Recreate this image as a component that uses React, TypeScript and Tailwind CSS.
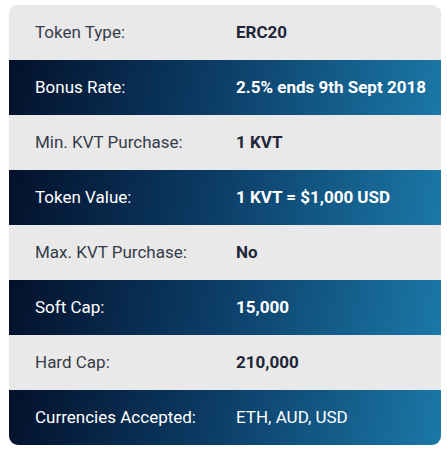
import React from "react";

const rows: { label: string; value: string; dark: boolean; valueWeight?: string }[] = [
  { label: "Token Type:", value: "ERC20", dark: false },
  { label: "Bonus Rate:", value: "2.5% ends 9th Sept 2018", dark: true },
  { label: "Min. KVT Purchase:", value: "1 KVT", dark: false },
  { label: "Token Value:", value: "1 KVT = $1,000 USD", dark: true },
  { label: "Max. KVT Purchase:", value: "No", dark: false },
  { label: "Soft Cap:", value: "15,000", dark: true },
  { label: "Hard Cap:", value: "210,000", dark: false },
  { label: "Currencies Accepted:", value: "ETH, AUD, USD", dark: true, valueWeight: "font-normal" },
];

export default function App() {
  return (
    <div className="w-[447px] h-[451px] bg-white pt-[5px] pl-[9px]" style={{ fontFamily: "Roboto, 'Noto Sans', sans-serif" }}>
      <div className="w-[432px] rounded-[9px] overflow-hidden bg-[#e9e9e9] flex flex-col">
        {rows.map((r, i) => (
          <div
            key={i}
            className={
              "h-[55px] flex items-center pl-[26px] text-[17px] " +
              (r.dark
                ? "bg-[linear-gradient(100deg,#03112b_0%,#0b3a63_45%,#1b78a8_100%)] text-white"
                : "bg-[#e9e9e9] text-[#353c4a]")
            }
          >
            <div className="w-[201px] font-normal">{r.label}</div>
            <div className={(r.valueWeight ? r.valueWeight : "font-bold") + (r.dark ? " text-white" : " text-[#1f2638]")}>{r.value}</div>
          </div>
        ))}
      </div>
    </div>
  );
}
